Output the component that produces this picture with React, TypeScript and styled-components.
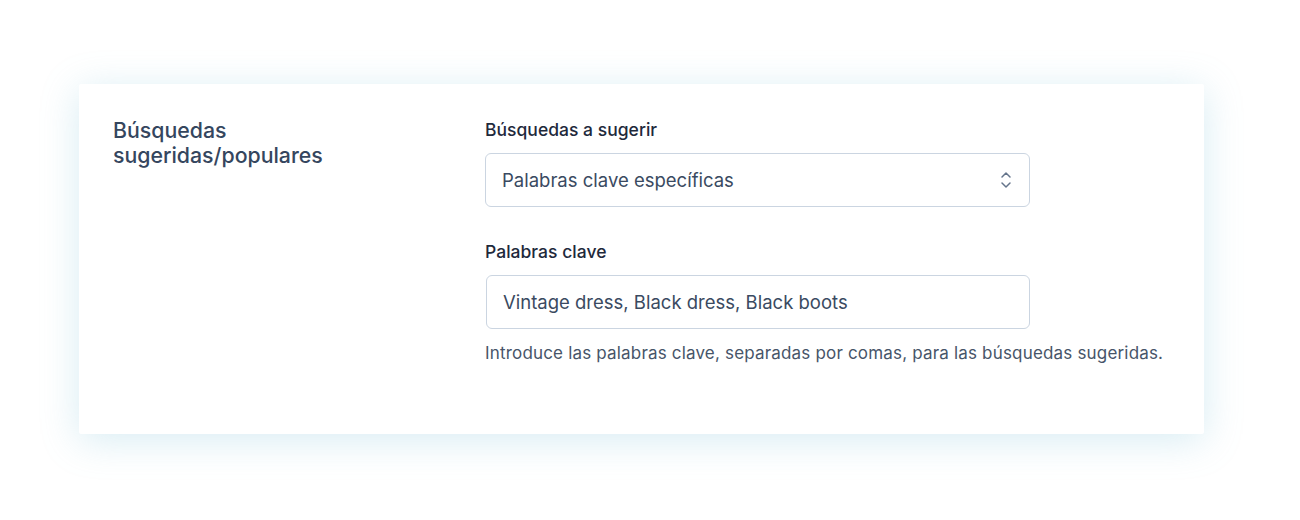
import React from 'react';
import styled, { createGlobalStyle } from 'styled-components';

const GlobalStyle = createGlobalStyle`
  body {
    margin: 0;
    background: #ffffff;
    font-family: Inter, "Noto Sans", sans-serif;
    -webkit-font-smoothing: antialiased;
  }
`;

const Page = styled.div`
  width: 1300px;
  height: 520px;
  padding: 84px 96px 0 79px;
  box-sizing: border-box;
`;

const Card = styled.section`
  width: 1125px;
  height: 350px;
  box-sizing: border-box;
  background: #ffffff;
  border-radius: 2px;
  box-shadow: 0 6px 38px rgba(110, 185, 212, 0.28);
  padding: 34px 34px 0 34px;
  display: grid;
  grid-template-columns: 372px 545px;
  align-items: start;
`;

const SectionTitle = styled.h2`
  margin: 0;
  font-size: 21.3px;
  line-height: 25px;
  font-weight: 500;
  color: #35465e;
`;

const Fields = styled.div`
  display: flex;
  flex-direction: column;
  gap: 33px;
`;

const Field = styled.div`
  display: flex;
  flex-direction: column;
`;

const Label = styled.label`
  font-size: 17.5px;
  line-height: 24px;
  font-weight: 500;
  letter-spacing: 0.02px;
  color: #1e293b;
  margin-bottom: 11px;
`;

const Box = styled.div<{ $shift?: number }>`
  height: 54px;
  box-sizing: border-box;
  border: 1px solid #cbd5e1;
  border-radius: 6px;
  margin-left: ${p => p.$shift ?? 0}px;
  padding: 0 16px;
  display: flex;
  align-items: center;
  justify-content: space-between;
  font-size: 18.5px;
  color: #3a4a61;
`;

const Help = styled.p`
  margin: 13px 0 0;
  font-size: 17px;
  line-height: 22px;
  letter-spacing: 0.18px;
  color: #475569;
  white-space: nowrap;
`;

function UpDown() {
  return (
    <svg width="14" height="24" viewBox="0 0 14 24" fill="none">
      <path d="M3 9 7 5 11 9" stroke="#64748b" strokeWidth="1.5" strokeLinecap="round" strokeLinejoin="round" />
      <path d="M3 15 7 19 11 15" stroke="#64748b" strokeWidth="1.5" strokeLinecap="round" strokeLinejoin="round" />
    </svg>
  );
}

export default function App() {
  return (
    <Page>
      <GlobalStyle />
      <Card>
        <SectionTitle>Búsquedas<br />sugeridas/populares</SectionTitle>
        <Fields>
          <Field>
            <Label>Búsquedas a sugerir</Label>
            <Box>
              <span>Palabras clave específicas</span>
              <UpDown />
            </Box>
          </Field>
          <Field>
            <Label>Palabras clave</Label>
            <Box $shift={1}>Vintage dress, Black dress, Black boots</Box>
            <Help>Introduce las palabras clave, separadas por comas, para las búsquedas sugeridas.</Help>
          </Field>
        </Fields>
      </Card>
    </Page>
  );
}
